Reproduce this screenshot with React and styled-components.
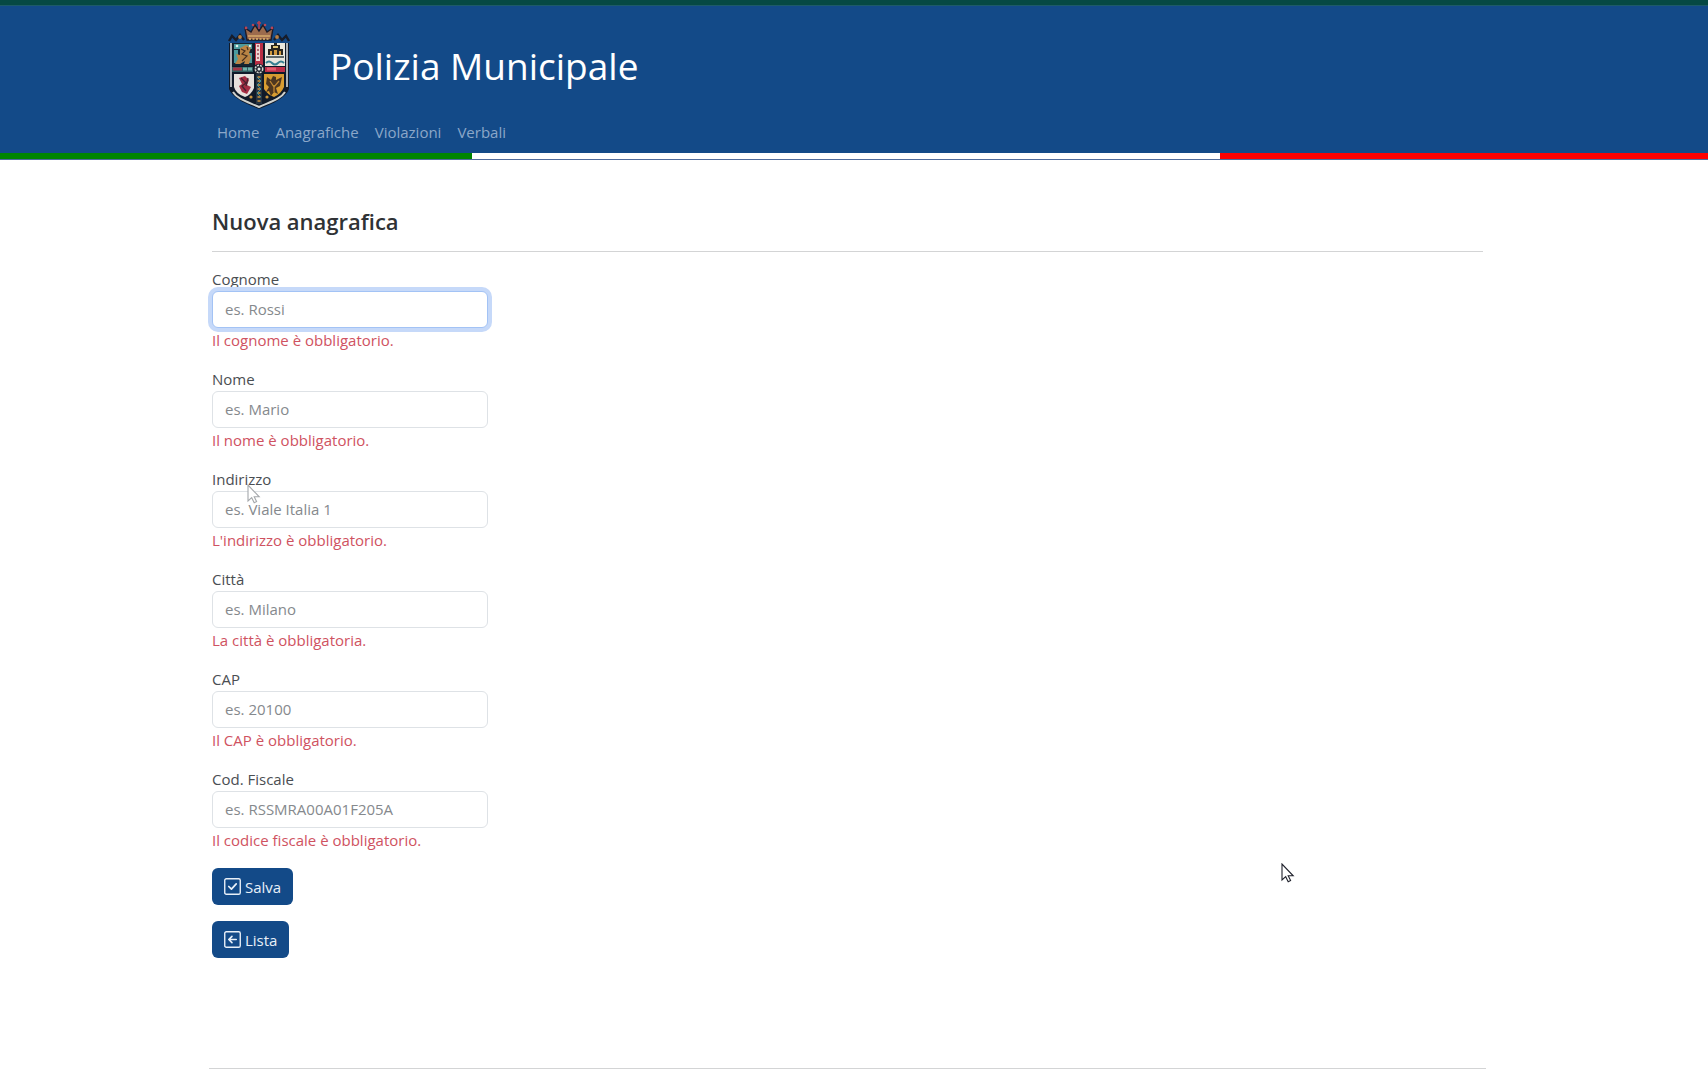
import React from "react";
import styled, { createGlobalStyle } from "styled-components";

const GlobalStyle = createGlobalStyle`
  *, *::before, *::after { box-sizing: border-box; }
  body {
    margin: 0;
    background: #fff;
    color: #4a4e52;
    font-family: "Open Sans", "Noto Sans", sans-serif;
    font-size: 15px;
    line-height: 24px;
  }
`;

const TopStrip = styled.div`
  height: 6px;
  background: #064943;
  border-bottom: 1px solid #1d5a68;
`;

const Header = styled.header`
  background: #134a88;
`;

const Container = styled.div`
  width: calc(100% - 13px);
  padding: 0 max(12px, calc((100% - 1284px) / 2));
`;

const Brand = styled.div`
  display: flex;
  align-items: center;
  gap: 30px;
  height: 112px;
  padding: 8px 8px 0;
`;

const Title = styled.h1`
  margin: 0;
  color: #fff;
  font-size: 37px;
  line-height: 48px;
  font-weight: 400;
`;

const Nav = styled.nav`
  display: flex;
  gap: 16px;
  height: 35px;
  padding: 2px 5px 8px;
`;

const NavLink = styled.a`
  color: #8ba7c9;
  text-decoration: none;
`;

const Flag = styled.div`
  display: grid;
  grid-template-columns: 472fr 748fr 488fr;
  height: 7px;
  border-bottom: 1px solid #4f6b9c;
`;

const Stripe = styled.span`
  background: ${(p) => p.$color};
`;

const Content = styled.main`
  padding-top: 45px;
`;

const Heading = styled.h2`
  margin: 0 0 14px;
  color: #2f3235;
  font-size: 22px;
  line-height: 32px;
  font-weight: 600;
`;

const Rule = styled.hr`
  height: 1px;
  margin: 0;
  border: 0;
  background: #d3d4d5;
`;

const Form = styled.form`
  display: flex;
  flex-direction: column;
  align-items: flex-start;
  gap: 16px;
  padding-top: 16px;
`;

const Field = styled.div`
  display: flex;
  flex-direction: column;
  width: 276px;
  max-width: 100%;
`;

const Label = styled.label`
  line-height: 23px;
`;

const Input = styled.input`
  height: 37px;
  padding: 5px 12px 6px;
  border: 1px solid #dee2e6;
  border-radius: 6px;
  background: #fff;
  color: #4a4e52;
  font: inherit;
  caret-color: transparent;
  &::placeholder { color: #85898d; opacity: 1; }
  &:focus {
    border-color: #a3c3f5;
    outline: 0;
    box-shadow: 0 0 0 4px #c6d9f9;
  }
`;

const ErrorText = styled.span`
  color: #cf5261;
`;

const Button = styled.button`
  display: inline-flex;
  align-items: center;
  gap: 4px;
  height: 37px;
  padding: 0 12px;
  border: 0;
  border-radius: 6px;
  background: #134a88;
  color: #e9f0f8;
  font: inherit;
`;

const Footer = styled.footer`
  margin: 0 -3px;
  padding-top: 110px;
`;

const Pointer = styled.svg`
  position: absolute;
  left: ${(p) => p.$x}px;
  top: ${(p) => p.$y}px;
  pointer-events: none;
`;

const CrestArt = styled.svg`
  flex: none;
`;

const Crest = () => (
  <CrestArt width="80" height="100" viewBox="0 0 80 100" aria-label="Stemma" role="img">
    <path d="M9 27H69V73C66 81 55 87 39 93C23 87 12 81 9 73Z" fill="#101a29" />
    <path d="M11 27V71" stroke="#d5d8da" strokeWidth="1.6" />
    <path d="M67 27V71" stroke="#d5d8da" strokeWidth="1.6" />
    <path d="M13 76C17 83 28 86 39 91C50 86 61 83 65 76" fill="none" stroke="#cfd1cd" strokeWidth="2" />
    <path d="M9 25l3-5 4 4 4-5 4 5M54 24l4-5 4 5 4-4 3 5" fill="none" stroke="#171d2b" strokeWidth="2.4" />
    <circle cx="20" cy="21" r="1.9" fill="#b78046" />
    <circle cx="57" cy="21" r="1.9" fill="#b78046" />
    <path d="M27 24L25 12l6 4 4-7 4 6 4-6 4 7 6-4-2 12Z" fill="#9c6b4d" stroke="#1d1a26" strokeWidth="1.4" />
    <path d="M28 20h22" stroke="#c89a63" strokeWidth="2" />
    <path d="M29 23h20" stroke="#e2b66e" strokeWidth="1.5" strokeDasharray="2 1.5" />
    <path d="M39 5v8M37 7h4" stroke="#b34150" strokeWidth="1.6" />
    <g fill="#b94455"><circle cx="26" cy="12" r="1.4" /><circle cx="33" cy="9" r="1.3" /><circle cx="45" cy="9" r="1.3" /><circle cx="52" cy="12" r="1.4" /></g>
    <path d="M13 27H33V50H13Z" fill="#152432" />
    <path d="M14 28H32V33H14ZM14 34h4v13h-4ZM29 37h3v10h-3Z" fill="#4c9b9e" />
    <path d="M20 32l6-3 5 3-2 5 2 4-2 7h-5l1-3-5 3h-5l3-5-2-5 4 1Z" fill="#ba8444" />
    <path d="M21 33l4 2-3 3 5 2-5 5M27 31l1 3" stroke="#49301f" strokeWidth="1.2" fill="none" />
    <circle cx="17" cy="30" r="1.3" fill="#e4eeec" /><circle cx="30" cy="30" r="1.2" fill="#e4eeec" />
    <path d="M35 27h8v22h-8Z" fill="#b82e44" />
    <path d="M36 28h4v17h-4Z" fill="#ecd6d3" />
    <path d="M38 29v15" stroke="#8c3442" strokeWidth="1.3" strokeDasharray="2 2" />
    <path d="M45 27h20v23H45Z" fill="#e9e7dd" />
    <path d="M48 39V33h3v-4h3v-2h3v2h3v4h3v6Z" fill="#29251f" />
    <path d="M50 35h2v4h-2ZM54 34h3v5h-3ZM59 35h2v4h-2Z" fill="#d19a3f" />
    <path d="M53 30h5v2h-5Z" fill="#e3c879" />
    <path d="M46 41h18" stroke="#243137" strokeWidth="1.4" />
    <path d="M46 47q3-3 6 0t6 0 6 0" stroke="#367f91" strokeWidth="2" fill="none" />
    <path d="M12 51h21v5H12Z" fill="#315e61" />
    <path d="M13 53h9" stroke="#a53646" strokeWidth="3" />
    <path d="M23 53h9" stroke="#72b1ac" strokeWidth="3" strokeDasharray="4 1" />
    <path d="M45 51h20v5H45Z" fill="#bb2d48" />
    <path d="M47 53h9" stroke="#e45c6d" strokeWidth="3" />
    <path d="M14 58h20v14q-3 7-9 9-9-3-11-10Z" fill="#e6e0dc" />
    <path d="M19 62l6-2 4 4-2 5 4 2-4 7-5-2-3-6 3-2Z" fill="#a42c43" />
    <path d="M21 62l5 5-4 3 4 5M28 62l-2 8" stroke="#49202f" fill="none" strokeWidth="1.3" />
    <path d="M44 58h20v13q-3 7-10 10-7-3-10-8Z" fill="#d89c31" />
    <path d="M47 61l4 3 2-4 3 1v3l6-3-2 9-4 2 2 6-4-2-3 4-2-5-3 1 3-5-3-3Z" fill="#4d3620" />
    <path d="M50 65l4 6 5-6M54 69v7" stroke="#bf8631" fill="none" strokeWidth="1.3" />
    <path d="M39 58v30" stroke="#253342" strokeWidth="6" />
    <path d="M39 60v28" stroke="#a47b3e" strokeWidth="3" strokeDasharray="2 2" />
    <path d="M37 61l4 4-4 4 4 4-4 4 4 4" stroke="#439094" fill="none" />
    <circle cx="31" cy="81" r="1.6" fill="#c9953f" /><circle cx="47" cy="81" r="1.6" fill="#c9953f" />
    <circle cx="39" cy="53" r="5.2" fill="#1c222e" />
    <circle cx="39" cy="53" r="3.7" fill="none" stroke="#d6d7d0" strokeWidth="1.5" strokeDasharray="2 1" />
    <circle cx="39" cy="53" r="1.5" fill="#e4e8e7" />
  </CrestArt>
);

const ButtonIcon = ({ children }) => (
  <svg width="17" height="17" viewBox="0 0 16 16" fill="none" stroke="currentColor" strokeWidth="1.3" strokeLinecap="round" strokeLinejoin="round" aria-hidden="true">
    <rect x="0.7" y="0.7" width="14.6" height="14.6" rx="1.5" />
    {children}
  </svg>
);

const Cursor = ({ x, y, ink }) => (
  <Pointer $x={x} $y={y} width="14" height="20" viewBox="0 0 14 20" aria-hidden="true">
    <path d="M1 1V17L4.7 13.7L7.2 18.7L9.6 17.6L7.2 12.8H12.2Z" fill="#fff" stroke={ink} strokeWidth="1.1" />
  </Pointer>
);

const links = ["Home", "Anagrafiche", "Violazioni", "Verbali"];

const fields = [
  { id: "cognome", label: "Cognome", hint: "es. Rossi", error: "Il cognome è obbligatorio." },
  { id: "nome", label: "Nome", hint: "es. Mario", error: "Il nome è obbligatorio." },
  { id: "indirizzo", label: "Indirizzo", hint: "es. Viale Italia 1", error: "L'indirizzo è obbligatorio." },
  { id: "citta", label: "Città", hint: "es. Milano", error: "La città è obbligatoria." },
  { id: "cap", label: "CAP", hint: "es. 20100", error: "Il CAP è obbligatorio." },
  { id: "codice", label: "Cod. Fiscale", hint: "es. RSSMRA00A01F205A", error: "Il codice fiscale è obbligatorio." },
];

export default function App() {
  return (
    <>
      <GlobalStyle />
      <TopStrip />
      <Header>
        <Container>
          <Brand>
            <Crest />
            <Title>Polizia Municipale</Title>
          </Brand>
          <Nav>
            {links.map((name) => (
              <NavLink key={name} href="#">{name}</NavLink>
            ))}
          </Nav>
        </Container>
        <Flag>
          <Stripe $color="#008500" />
          <Stripe $color="#fff" />
          <Stripe $color="#fe0000" />
        </Flag>
      </Header>
      <Container>
        <Content>
          <Heading>Nuova anagrafica</Heading>
          <Rule />
          <Form noValidate onSubmit={(e) => e.preventDefault()}>
            {fields.map((f, i) => (
              <Field key={f.id}>
                <Label htmlFor={f.id}>{f.label}</Label>
                <Input id={f.id} type="text" placeholder={f.hint} autoFocus={i === 0} aria-describedby={f.id + "-error"} />
                <ErrorText id={f.id + "-error"}>{f.error}</ErrorText>
              </Field>
            ))}
            <Button type="submit">
              <ButtonIcon><path d="M4.5 8L7 10.5L11.5 5.5" strokeWidth="1.6" /></ButtonIcon>
              Salva
            </Button>
            <Button type="button">
              <ButtonIcon><path d="M11.5 8H4.5M7.5 5L4.5 8L7.5 11" strokeWidth="1.5" /></ButtonIcon>
              Lista
            </Button>
          </Form>
        </Content>
        <Footer>
          <Rule />
        </Footer>
      </Container>
      <Cursor x={247} y={484} ink="#a5a8ac" />
      <Cursor x={1281} y={863} ink="#20222c" />
    </>
  );
}
